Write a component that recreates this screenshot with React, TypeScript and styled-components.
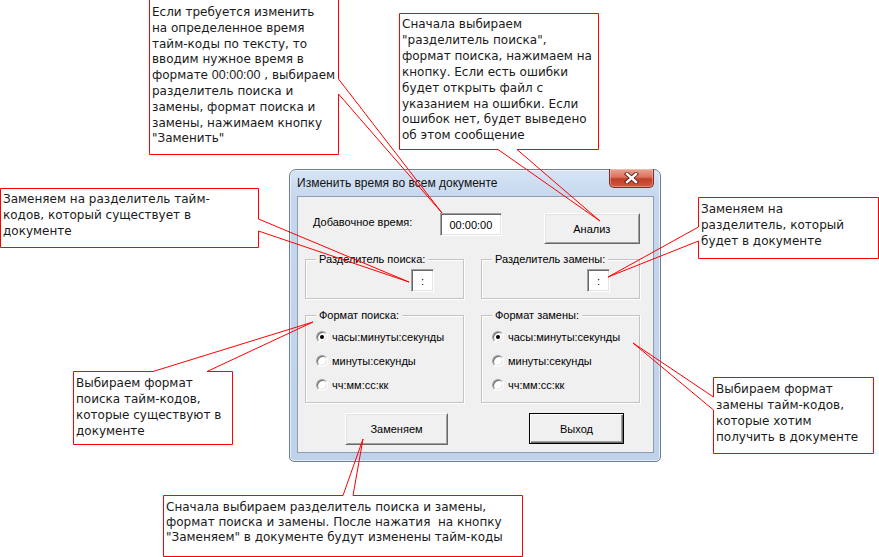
import React from 'react'
import styled, { createGlobalStyle } from 'styled-components'

const GlobalStyle = createGlobalStyle`
  html, body {
    margin: 0;
    padding: 0;
    background: #fff;
  }
  body {
    font-family: 'Liberation Sans', Arial, sans-serif;
  }
`

const Canvas = styled.div`
  position: relative;
  width: 879px;
  height: 557px;
  overflow: hidden;
  background: #fff;
`

/* ---------- dialog window ---------- */

const Window = styled.div`
  position: absolute;
  left: 289px;
  top: 169px;
  width: 372px;
  height: 293px;
  box-sizing: border-box;
  display: flex;
  flex-direction: column;
  padding: 0 6px 8px 7px;
  border: 1px solid #6e7e92;
  border-radius: 7px 7px 5px 5px;
  background: linear-gradient(180deg, #d6e4f5 0%, #c5d7ed 10%, #bed2ea 100%);
  box-shadow: inset 0 0 0 1px rgba(255, 255, 255, 0.6);
`

const TitleBar = styled.div`
  height: 26px;
  display: flex;
  align-items: flex-start;
  justify-content: space-between;
`

const TitleText = styled.div`
  font-size: 12px;
  line-height: 26px;
  color: #111;
`

const CloseButton = styled.div`
  width: 45px;
  height: 19px;
  margin-top: -1px;
  box-sizing: border-box;
  display: flex;
  align-items: center;
  justify-content: center;
  border: 1px solid #7a2c22;
  border-top: none;
  border-radius: 0 0 5px 5px;
  background: linear-gradient(180deg, #eaa594 0%, #d9735d 45%, #c23e28 55%, #cf5a40 100%);
  box-shadow: inset 0 0 0 1px rgba(255, 210, 200, 0.45);
`

const Client = styled.div`
  flex: 1;
  box-sizing: border-box;
  display: flex;
  flex-direction: column;
  padding: 16px 13px 0 7px;
  border: 1px solid #8d9cb1;
  background: #f0f0f0;
  font-size: 11px;
  color: #000;
`

const TopRow = styled.div`
  display: flex;
  align-items: flex-start;
  height: 31px;
`

const FieldLabel = styled.div`
  width: 136px;
  box-sizing: border-box;
  padding-left: 8px;
  line-height: 18px;
`

const Sunken = styled.div<{ $w: number; $mr?: number }>`
  width: ${p => p.$w}px;
  height: 23px;
  margin-right: ${p => p.$mr ?? 0}px;
  box-sizing: border-box;
  display: flex;
  align-items: center;
  justify-content: center;
  background: #fff;
  border: 1px solid;
  border-color: #a0a0a0 #fff #fff #a0a0a0;
  box-shadow: inset 1px 1px 0 #696969, inset -1px -1px 0 #e3e3e3;
  font-size: 11px;
`

const Button = styled.div<{ $w: number; $h: number; $default?: boolean }>`
  width: ${p => p.$w}px;
  height: ${p => p.$h}px;
  box-sizing: border-box;
  display: flex;
  align-items: center;
  justify-content: center;
  background: #f0f0f0;
  border: 1px solid;
  border-color: ${p => (p.$default ? '#000' : '#fff #696969 #696969 #fff')};
  box-shadow: ${p =>
    p.$default
      ? 'inset 1px 1px 0 #fff, inset -1px -1px 0 #696969, inset -2px -2px 0 #a0a0a0'
      : 'inset 1px 1px 0 #e3e3e3, inset -1px -1px 0 #a0a0a0'};
  font-size: 11px;
`

const GroupRow = styled.div<{ $gap: number }>`
  display: flex;
  gap: 17px;
  margin-top: ${p => p.$gap}px;
`

const GroupBox = styled.div<{ $h: number }>`
  position: relative;
  width: 159px;
  height: ${p => p.$h}px;
  box-sizing: border-box;
  border: 1px solid #c3c3c3;
  box-shadow: inset 1px 1px 0 #fff, 1px 1px 0 #fff;
`

const Caption = styled.span`
  position: absolute;
  top: -7px;
  left: 10px;
  padding: 0 3px;
  background: #f0f0f0;
  line-height: 13px;
  white-space: nowrap;
`

const SeparatorSlot = styled.div`
  display: flex;
  padding: 9px 0 0 105px;
`

const RadioList = styled.div`
  display: flex;
  flex-direction: column;
  padding: 9px 0 0 10px;
`

const RadioRow = styled.div`
  height: 24px;
  display: flex;
  align-items: center;
  gap: 4px;
  white-space: nowrap;
`

const RadioDot = styled.span<{ $checked?: boolean }>`
  position: relative;
  width: 12px;
  height: 12px;
  box-sizing: border-box;
  border-radius: 50%;
  background: #fff;
  border: 1px solid;
  border-color: #a0a0a0 #fff #fff #a0a0a0;
  box-shadow: inset 1px 1px 0 #696969, inset -1px -1px 0 #e3e3e3;

  &::after {
    content: '';
    display: ${p => (p.$checked ? 'block' : 'none')};
    position: absolute;
    left: 3px;
    top: 3px;
    width: 4px;
    height: 4px;
    border-radius: 50%;
    background: #000;
  }
`

const ButtonRow = styled.div`
  display: flex;
  align-items: flex-start;
  margin-top: 10px;
  padding-left: 40px;
  gap: 81px;
`

/* ---------- callouts ---------- */

const CalloutBox = styled.div<{ $x: number; $y: number; $w: number; $h: number; $pt: number; $lh: number }>`
  position: absolute;
  left: ${p => p.$x}px;
  top: ${p => p.$y}px;
  width: ${p => p.$w}px;
  height: ${p => p.$h}px;
  box-sizing: border-box;
  padding: ${p => p.$pt}px 0 0 3px;
  background: #fff;
  font-family: 'DejaVu Sans', Verdana, sans-serif;
  font-size: 12px;
  line-height: ${p => p.$lh}px;
  color: #1a1a1a;
  white-space: pre;
`

const Digits = styled.span`
  font-family: 'Liberation Sans', Arial, sans-serif;
  font-size: 12.5px;
`

const Overlay = styled.svg`
  position: absolute;
  left: 0;
  top: 0;
  pointer-events: none;
`

type Side = 'top' | 'right' | 'bottom' | 'left'

type Callout = {
  x: number
  y: number
  w: number
  h: number
  pt: number
  lh: number
  side: Side
  base: [number, number]
  tip: [number, number]
  lines: React.ReactNode[]
}

const callouts: Callout[] = [
  {
    x: 149, y: -1, w: 190, h: 156, pt: 6, lh: 15.8, side: 'right', base: [79, 94], tip: [442, 213],
    lines: [
      'Если требуется изменить',
      'на определенное время',
      'тайм-коды по тексту, то',
      'вводим нужное время в',
      <>
        формате <Digits>00:00:00</Digits> , выбираем
      </>,
      'разделитель поиска и',
      'замены, формат поиска и',
      'замены, нажимаем кнопку',
      '"Заменить"',
    ],
  },
  {
    x: 399, y: 13, w: 200, h: 137, pt: 4, lh: 15.9, side: 'bottom', base: [498, 517], tip: [600, 221],
    lines: [
      'Сначала выбираем',
      '"разделитель поиска",',
      'формат поиска, нажимаем на',
      'кнопку. Если есть ошибки',
      'будет открыть файл с',
      'указанием на ошибки. Если',
      'ошибок нет, будет выведено',
      'об этом сообщение',
    ],
  },
  {
    x: 0, y: 188, w: 259, h: 60, pt: 4, lh: 15.8, side: 'right', base: [219, 231], tip: [409, 282],
    lines: ['Заменяем на разделитель тайм-', 'кодов, который существует в', 'документе'],
  },
  {
    x: 73, y: 371, w: 160, h: 74, pt: 4, lh: 16, side: 'top', base: [153, 207], tip: [313, 322],
    lines: ['Выбираем формат', 'поиска тайм-кодов,', 'которые существуют в', 'документе'],
  },
  {
    x: 698, y: 197, w: 181, h: 62, pt: 4, lh: 16, side: 'left', base: [227, 241], tip: [608, 277],
    lines: ['Заменяем на', 'разделитель, который', 'будет в документе'],
  },
  {
    x: 713, y: 377, w: 161, h: 77, pt: 4, lh: 16, side: 'left', base: [397, 410], tip: [633, 343],
    lines: ['Выбираем формат', 'замены тайм-кодов,', 'которые хотим', 'получить в документе'],
  },
  {
    x: 163, y: 495, w: 360, h: 62, pt: 5, lh: 15, side: 'top', base: [343, 353], tip: [363, 439],
    lines: [
      'Сначала выбираем разделитель поиска и замены,',
      'формат поиска и замены. После нажатия  на кнопку',
      '"Заменяем" в документе будут изменены тайм-коды',
    ],
  },
]

function outline(c: Callout) {
  const L = c.x + 0.5
  const T = c.y + 0.5
  const R = c.x + c.w - 0.5
  const B = c.y + c.h - 0.5
  const [a, b] = c.base
  const tip = c.tip
  let pts: number[][]
  switch (c.side) {
    case 'top':
      pts = [[L, T], [a, T], tip, [b, T], [R, T], [R, B], [L, B]]
      break
    case 'right':
      pts = [[L, T], [R, T], [R, a], tip, [R, b], [R, B], [L, B]]
      break
    case 'bottom':
      pts = [[L, T], [R, T], [R, B], [b, B], tip, [a, B], [L, B]]
      break
    default:
      pts = [[L, T], [R, T], [R, B], [L, B], [L, b], tip, [L, a]]
  }
  return pts.map(p => p.join(',')).join(' ')
}

const CloseGlyph = () => (
  <svg width="15" height="12" viewBox="0 0 15 12">
    <path d="M3 2 L12 10 M12 2 L3 10" stroke="#5a1d14" strokeWidth="4.2" strokeLinecap="square" />
    <path d="M3 2 L12 10 M12 2 L3 10" stroke="#fff" strokeWidth="2.4" strokeLinecap="square" />
  </svg>
)

const formats = ['часы:минуты:секунды', 'минуты:секунды', 'чч:мм:сс:кк']

const FormatGroup: React.FC<{ title: string }> = ({ title }) => (
  <GroupBox $h={88}>
    <Caption>{title}</Caption>
    <RadioList>
      {formats.map((f, i) => (
        <RadioRow key={f}>
          <RadioDot $checked={i === 0} />
          {f}
        </RadioRow>
      ))}
    </RadioList>
  </GroupBox>
)

const SeparatorGroup: React.FC<{ title: string }> = ({ title }) => (
  <GroupBox $h={40}>
    <Caption>{title}</Caption>
    <SeparatorSlot>
      <Sunken $w={23}>:</Sunken>
    </SeparatorSlot>
  </GroupBox>
)

export default function App() {
  return (
    <Canvas>
      <GlobalStyle />
      <Window>
        <TitleBar>
          <TitleText>Изменить время во всем документе</TitleText>
          <CloseButton>
            <CloseGlyph />
          </CloseButton>
        </TitleBar>
        <Client>
          <TopRow>
            <FieldLabel>Добавочное время:</FieldLabel>
            <Sunken $w={62} $mr={42}>00:00:00</Sunken>
            <Button $w={97} $h={31}>Анализ</Button>
          </TopRow>
          <GroupRow $gap={15}>
            <SeparatorGroup title="Разделитель поиска:" />
            <SeparatorGroup title="Разделитель замены:" />
          </GroupRow>
          <GroupRow $gap={16}>
            <FormatGroup title="Формат поиска:" />
            <FormatGroup title="Формат замены:" />
          </GroupRow>
          <ButtonRow>
            <Button $w={103} $h={32}>Заменяем</Button>
            <Button $w={95} $h={31} $default>Выход</Button>
          </ButtonRow>
        </Client>
      </Window>

      {callouts.map((c, i) => (
        <CalloutBox key={i} $x={c.x} $y={c.y} $w={c.w} $h={c.h} $pt={c.pt} $lh={c.lh}>
          {c.lines.map((l, j) => (
            <div key={j}>{l}</div>
          ))}
        </CalloutBox>
      ))}

      <Overlay width={879} height={557}>
        {callouts.map((c, i) => (
          <polygon key={i} points={outline(c)} fill="none" stroke="#ff0000" strokeWidth={1} />
        ))}
      </Overlay>
    </Canvas>
  )
}
